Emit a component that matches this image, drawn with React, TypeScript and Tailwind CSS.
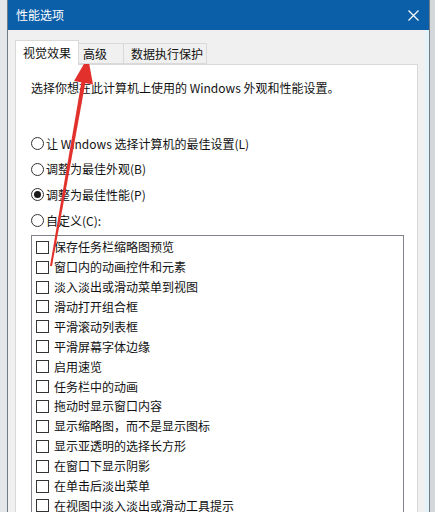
import React from 'react';

const checks = [
  '保存任务栏缩略图预览',
  '窗口内的动画控件和元素',
  '淡入淡出或滑动菜单到视图',
  '滑动打开组合框',
  '平滑滚动列表框',
  '平滑屏幕字体边缘',
  '启用速览',
  '任务栏中的动画',
  '拖动时显示窗口内容',
  '显示缩略图，而不是显示图标',
  '显示亚透明的选择长方形',
  '在窗口下显示阴影',
  '在单击后淡出菜单',
  '在视图中淡入淡出或滑动工具提示',
];

const radios = [
  { label: '让 Windows 选择计算机的最佳设置(L)', checked: false },
  { label: '调整为最佳外观(B)', checked: false },
  { label: '调整为最佳性能(P)', checked: true },
  { label: '自定义(C):', checked: false },
];

// 红色标注箭头（截图上的手绘标记）
const Arrow = () => (
  <svg className="absolute left-0 top-0 pointer-events-none" width="435" height="512" viewBox="0 0 435 512">
    <polygon points="50,266 52,266 85.5,82 81.5,81.5" fill="#e2312c" />
    <polygon points="88,57 93,84.5 74,81" fill="#e2312c" />
  </svg>
);

export default function App() {
  return (
    <div className="relative w-[435px] h-[512px] overflow-hidden flex bg-[#e6e8ea] font-['Noto_Sans_CJK_SC',sans-serif] text-[12px] text-[#111111]">
      <div className="w-[7px] shrink-0 bg-[#e4e7ea]" />

      {/* 窗口 */}
      <div className="w-[423px] shrink-0 flex flex-col border-x border-[#6f7c88]">
        <div className="h-[30px] shrink-0 bg-[#0b5fa9] flex items-center justify-between pl-[8px] pr-[10px]">
          <span className="text-white text-[12px] leading-none">性能选项</span>
          <svg width="11" height="11" viewBox="0 0 11 11">
            <path d="M0.5 0.5 L10.5 10.5 M10.5 0.5 L0.5 10.5" stroke="#ffffff" strokeWidth="1.2" />
          </svg>
        </div>

        <div className="flex-1 flex bg-[#f0f0f0]">
          <div className="w-[417px] flex flex-col pl-[7px] pt-[10px]">
            {/* 选项卡 */}
            <div className="flex items-start h-[24px] relative z-10">
              <div className="w-[64px] h-[25px] bg-white border border-b-0 border-[#d9d9d9] flex items-center pl-[7px] leading-none">
                视觉效果
              </div>
              <div className="w-[45px] h-[21px] mt-[3px] bg-[#f0f0f0] border border-l-0 border-[#d9d9d9] flex items-center pl-[4px] leading-none">
                高级
              </div>
              <div className="w-[83px] h-[21px] mt-[3px] bg-[#f0f0f0] border border-l-0 border-[#d9d9d9] flex items-center pl-[7px] leading-none">
                数据执行保护
              </div>
            </div>

            {/* 面板 */}
            <div className="w-[403px] flex-1 bg-white border border-[#d9d9d9] pt-[15px] pl-[15px]">
              <div className="h-[16px] leading-[16px]">选择你想在此计算机上使用的 Windows 外观和性能设置。</div>

              <div className="mt-[35px] flex flex-col">
                {radios.map((r) => (
                  <div key={r.label} className="h-[25.6px] flex items-center gap-[2px]">
                    <span className="w-[13px] h-[13px] rounded-full border border-[#333333] bg-white flex items-center justify-center">
                      {r.checked && <span className="w-[7px] h-[7px] rounded-full bg-[#1a1a1a]" />}
                    </span>
                    <span className="leading-none">{r.label}</span>
                  </div>
                ))}
              </div>

              <div className="mt-[2px] w-[373px] h-[300px] border border-[#7f8389] pt-[1px] pl-[4px]">
                {checks.map((c) => (
                  <div key={c} className="h-[19.9px] flex items-center gap-[5px]">
                    <span className="w-[13px] h-[13px] border border-[#333333] bg-white shrink-0" />
                    <span className="leading-none">{c}</span>
                  </div>
                ))}
              </div>
            </div>
          </div>
          <div className="w-[4px] bg-[#e3f3f8]" />
        </div>
      </div>

      <div className="flex-1 bg-[#d4d7da]" />

      <Arrow />
    </div>
  );
}
